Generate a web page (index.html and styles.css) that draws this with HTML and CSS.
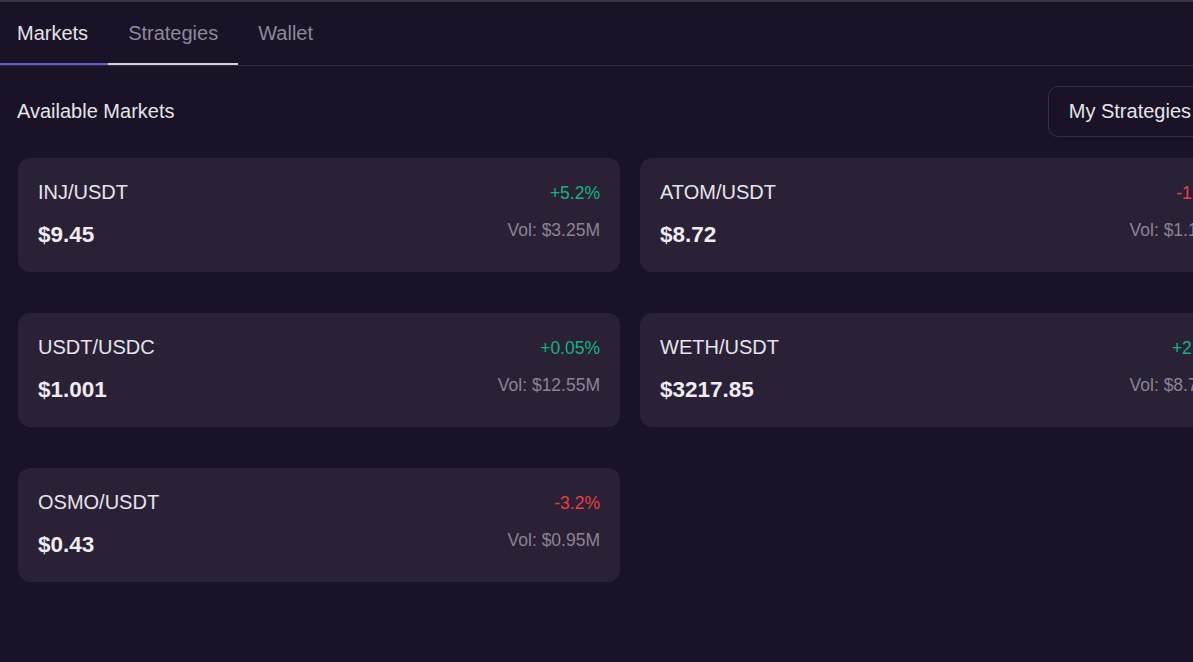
FILE: index.html
```html
<!DOCTYPE html>
<html lang="en">
<head>
<meta charset="utf-8">
<title>Markets</title>
<link rel="stylesheet" href="styles.css">
</head>
<body>
<div class="app">
  <nav class="tabs">
    <button class="tab tab-first is-active">Markets</button>
    <button class="tab is-hover">Strategies</button>
    <button class="tab">Wallet</button>
  </nav>
  <main class="content">
    <div class="section-header">
      <h2 class="section-title">Available Markets</h2>
      <button class="outline-btn">My Strategies</button>
    </div>
    <div class="market-grid">
      <div class="market-card">
        <div class="card-row">
          <span class="pair">INJ/USDT</span>
          <span class="change up">+5.2%</span>
        </div>
        <div class="card-row row-bottom">
          <span class="price">$9.45</span>
          <span class="vol">Vol: $3.25M</span>
        </div>
      </div>
      <div class="market-card">
        <div class="card-row">
          <span class="pair">ATOM/USDT</span>
          <span class="change down">-1.8%</span>
        </div>
        <div class="card-row row-bottom">
          <span class="price">$8.72</span>
          <span class="vol">Vol: $1.12M</span>
        </div>
      </div>
      <div class="market-card">
        <div class="card-row">
          <span class="pair">USDT/USDC</span>
          <span class="change up">+0.05%</span>
        </div>
        <div class="card-row row-bottom">
          <span class="price">$1.001</span>
          <span class="vol">Vol: $12.55M</span>
        </div>
      </div>
      <div class="market-card">
        <div class="card-row">
          <span class="pair">WETH/USDT</span>
          <span class="change up">+2.1%</span>
        </div>
        <div class="card-row row-bottom">
          <span class="price">$3217.85</span>
          <span class="vol">Vol: $8.75M</span>
        </div>
      </div>
      <div class="market-card">
        <div class="card-row">
          <span class="pair">OSMO/USDT</span>
          <span class="change down">-3.2%</span>
        </div>
        <div class="card-row row-bottom">
          <span class="price">$0.43</span>
          <span class="vol">Vol: $0.95M</span>
        </div>
      </div>
    </div>
  </main>
</div>
</body>
</html>
```

FILE: styles.css
```css
html, body {
  margin: 0;
  padding: 0;
  background: #1a1226;
  overflow: hidden;
}

body {
  font-family: "Liberation Sans", Arial, sans-serif;
  color: #e6e4ea;
}

.app {
  width: 1261px;
  min-height: 662px;
  background: #1a1226;
  border-top: 2px solid #39323f;
}

.tabs {
  display: flex;
  border-bottom: 1px solid #332b3d;
}

.tab {
  font-family: inherit;
  font-size: 20px;
  line-height: 28px;
  background: none;
  border: none;
  border-bottom: 2px solid transparent;
  padding: 17px 20px 16px;
  margin: 0;
  color: #8e8899;
  cursor: pointer;
}

.tab-first {
  padding-left: 17px;
  padding-right: 20px;
}

.tab.is-active {
  color: #e4e2e8;
  border-bottom-color: #5c5fd2;
}

.tab.is-hover {
  border-bottom-color: #d2d1d8;
}

.content {
  padding: 20px 18px 40px;
}

.section-header {
  display: flex;
  align-items: center;
  justify-content: space-between;
  height: 51px;
  margin-bottom: 21px;
}

.section-title {
  margin: 0;
  font-size: 20px;
  font-weight: normal;
  color: #e6e4ea;
  margin-left: -1px;
}

.outline-btn {
  font-family: inherit;
  font-size: 20px;
  height: 51px;
  padding: 0 20px;
  margin-left: auto;
  margin-right: 31px;
  background: transparent;
  color: #e6e4ea;
  border: 1px solid #362e42;
  border-radius: 10px;
}

.market-grid {
  display: grid;
  grid-template-columns: 602px 602px;
  column-gap: 20px;
  row-gap: 41px;
}

.market-card {
  background: #2a2137;
  border-radius: 12px;
  padding: 20px 20px 21px;
  height: 114px;
  box-sizing: border-box;
}

.card-row {
  display: flex;
  justify-content: space-between;
  align-items: baseline;
}

.row-bottom {
  align-items: flex-start;
  margin-top: 13px;
}

.pair {
  font-size: 20px;
  line-height: 28px;
  color: #e6e4ea;
}

.change {
  font-size: 17.5px;
  line-height: 24px;
}

.change.up {
  color: #12b47e;
}

.change.down {
  color: #e8403f;
}

.price {
  font-size: 22.5px;
  line-height: 32px;
  font-weight: bold;
  color: #efedf2;
}

.vol {
  font-size: 17.5px;
  line-height: 22px;
  color: #8a8494;
}
```
